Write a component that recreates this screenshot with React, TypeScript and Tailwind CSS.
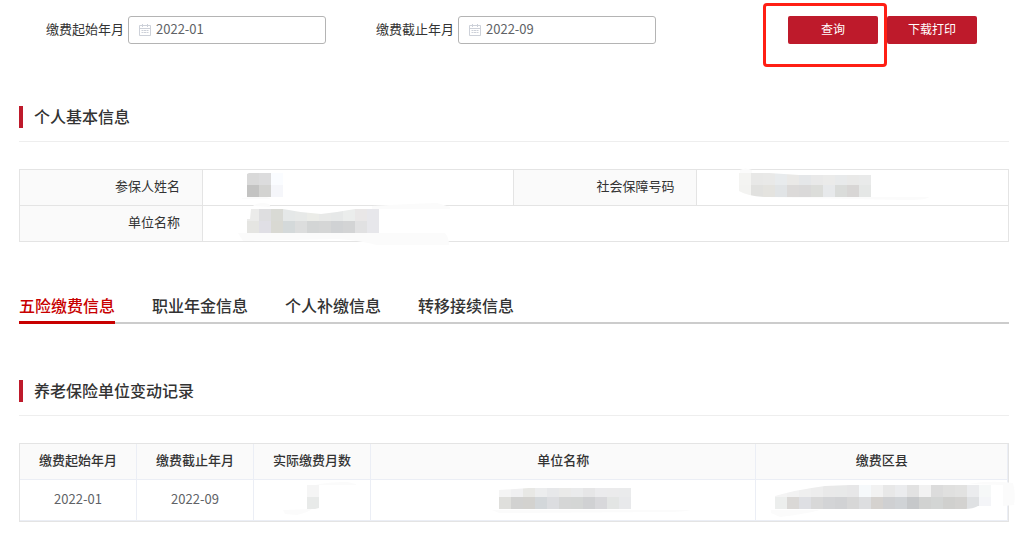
import type { ReactNode } from "react";

type Mosaic = {
  label: string;
  width: number;
  height: number;
  clip: string;
  rows: string[][];
  haze?: string;
};

const nameMosaic: Mosaic = {
  label: "参保人姓名已隐藏",
  width: 36,
  height: 24,
  clip: "M2 0H36V24H0V1Z",
  rows: [
    ["#d9d9d9", "#dcdcdd", "#fafcff"],
    ["#c3c3c2", "#d3d3d1", "#f5f6fa"],
  ],
  haze: "M-5 25Q8 23 20 24L24 26H-5Z",
};

const idMosaic: Mosaic = {
  label: "社会保障号码已隐藏",
  width: 132,
  height: 24,
  clip: "M0 0H30L60 2H132V24H25Q8 23 0 18Z",
  rows: [
    ["#f4f4f2", "#e8e8e7", "#e9e9e8", "#e8ebed", "#eae9e7", "#e5e7e9", "#e9e9e9", "#ebebea", "#e8eaeb", "#e9e9e8", "#e9eaea"],
    ["#f3f3f1", "#e1e1df", "#e4e3df", "#e1e4e6", "#dcdad9", "#dad9d9", "#dcddda", "#e7e9eb", "#dadcda", "#d8d6d5", "#e5e7e6"],
  ],
  haze: "M25 24H190Q188 27 168 27L60 25ZM1 -3Q6 -6 13 -3L13 0H1Z",
};

const companyMosaic: Mosaic = {
  label: "单位名称已隐藏",
  width: 132,
  height: 24,
  clip: "M4 0H36Q55 4 74 5Q92 3 108 0H132V24H0V10H3Z",
  rows: [
    ["#ebebea", "#dedee0", "#d9dad5", "#e5e8e8", "#e7e9e8", "#ebece8", "#e8e9e8", "#e6e8e8", "#ebedec", "#e9e7e7", "#e7e7eb"],
    ["#e5e5e2", "#e0dfe5", "#d9d9d3", "#d4d9da", "#dcdddd", "#d3d5d5", "#d5d6d6", "#d0d2d4", "#d3d4d5", "#e1e1e2", "#e7e7eb"],
  ],
  haze: "M-9 24H198Q202 28 202 36H130Q110 31 90 30L-4 32ZM6 -3Q12 -8 22 -5L24 -2ZM125 -3Q160 -5 190 -6L203 -2V0H125Z",
};

const monthsMosaic: Mosaic = {
  label: "实际缴费月数已隐藏",
  width: 12,
  height: 24,
  clip: "M0 0H12V23L8 24H0Z",
  rows: [["#f5f5f5"], ["#e8eae9"]],
  haze: "M8 0Q20 -3 40 -3L49 -1V0ZM-24 25L5 24Q2 27 -10 30L-22 29Z",
};

const employerMosaic: Mosaic = {
  label: "单位名称已隐藏",
  width: 132,
  height: 24,
  clip: "M0 5L30 3H132V24H0Z",
  rows: [
    ["#f4f4f4", "#f0f0f1", "#e8e8e5", "#ecedee", "#e7e8ea", "#eaeae9", "#eaebec", "#e6e6e7", "#ebebed", "#ebebec", "#eaebec"],
    ["#dfdfdc", "#d2d2d1", "#d3d2cf", "#d3d7da", "#dcdde0", "#d5d6d6", "#d4d6d5", "#d0d1d3", "#d8d8db", "#e3e5e4", "#e8e9eb"],
  ],
  haze: "M-7 25H192Q184 27 165 27L0 28Z",
};

const districtMosaic: Mosaic = {
  label: "缴费区县已隐藏",
  width: 216,
  height: 24,
  clip: "M0 11Q20 5 50 1L75 0H216V21H203Q198 24 190 24H0Z",
  rows: [
    ["#f4f4f4", "#f2f2f2", "#efefef", "#ededed", "#e9e9e9", "#e8e9e9", "#e7e7e8", "#f6f9fb", "#f2f2f2", "#e8e8e8", "#ebecee", "#e2e2e2", "#f2f2f2", "#dcdcdc", "#e0e0df", "#e2e2e1", "#ebecee", "#f6f8f8"],
    ["#eceeed", "#dad8d6", "#dedfe3", "#d8d8d8", "#d3d4d6", "#d1d2d4", "#d7d7d7", "#dddee0", "#d5d2cf", "#cfd0d2", "#d0d3d6", "#c6c8ca", "#d1d2d1", "#d3d5d4", "#d0d0ce", "#d3d2d0", "#dfe1e3", "#f4f5f8"],
  ],
  haze: "M-4 25H45Q30 29 5 32L-4 28ZM193 -1Q215 -5 238 -2Q241 8 239 20L228 21V0Z",
};

function Redacted({ data }: { data: Mosaic }) {
  const id = `clip-${data.label}-${data.width}-${data.clip.length}`;
  return (
    <svg
      role="img"
      aria-label={data.label}
      width={data.width}
      height={data.height}
      viewBox={`0 0 ${data.width} ${data.height}`}
      className="block shrink-0 overflow-visible"
    >
      <clipPath id={id}>
        <path d={data.clip} />
      </clipPath>
      {data.haze && <path d={data.haze} fill="#fbfbfb" />}
      <g clipPath={`url(#${id})`} shapeRendering="crispEdges">
        {data.rows.map((row, y) =>
          row.map((fill, x) => <rect key={`${x}-${y}`} x={x * 12} y={y * 12} width={12} height={12} fill={fill} />),
        )}
      </g>
    </svg>
  );
}

function CalendarIcon() {
  return (
    <svg aria-hidden="true" width="12" height="12" viewBox="0 0 12 12" fill="none" stroke="#cdd1d9" className="shrink-0">
      <path d="M.5 1.5h11v10H.5zM.5 4.5h11M3.5 0v3M8.5 0v3" />
      <path d="M2.5 6.5h7M2.5 8.5h7" strokeDasharray="2 .5" />
    </svg>
  );
}

function MonthField({ id, label, value }: { id: string; label: string; value: string }) {
  return (
    <div className="flex items-center pr-[23px]">
      <label htmlFor={id} className="w-[109px] shrink-0 pr-1 pb-0.5 text-right text-[13px] text-[#333]">
        {label}
      </label>
      <div className="flex h-7 min-w-0 flex-1 items-center gap-[5px] rounded-[3px] border border-[#b4b4b4] pl-2.5">
        <CalendarIcon />
        <input id={id} defaultValue={value} className="w-full min-w-0 bg-transparent pb-0.5 text-[13px] text-[#606266] outline-none" />
      </div>
    </div>
  );
}

function SectionTitle({ children }: { children: ReactNode }) {
  return (
    <div className="border-b border-[#eee] pb-[13px]">
      <h2 className="border-l-4 border-[#be1a2b] pb-0.5 pl-[11px] text-base leading-5 font-medium text-[#333]">{children}</h2>
    </div>
  );
}

const tabs = ["五险缴费信息", "职业年金信息", "个人补缴信息", "转移接续信息"];

export default function App() {
  return (
    <main className="min-h-screen bg-white pt-4 pr-6 pb-7 pl-[19px] font-['Noto_Sans_CJK_SC',sans-serif] text-[13px] text-[#333]">
      <form className="grid grid-cols-3" onSubmit={(e) => e.preventDefault()}>
        <MonthField id="start" label="缴费起始年月" value="2022-01" />
        <MonthField id="end" label="缴费截止年月" value="2022-09" />
        <div className="flex gap-[9px] pl-[109px]">
          <div className="relative">
            <button type="submit" className="block h-7 w-[90px] rounded-xs bg-[#be1a2b] pb-0.5 text-xs text-white">
              查询
            </button>
            <span className="pointer-events-none absolute -top-[13px] -right-[9px] -bottom-[23px] -left-[25px] z-10 rounded-[4px] border-3 border-[#ff1f14]" />
          </div>
          <button type="button" className="h-7 w-[90px] rounded-xs bg-[#be1a2b] pb-0.5 text-xs text-white">
            下载打印
          </button>
        </div>
      </form>

      <section className="mt-[62px]">
        <SectionTitle>个人基本信息</SectionTitle>
        <table className="mt-[27px] w-full table-fixed border-collapse">
          <colgroup>
            <col className="w-[18.5%]" />
            <col className="w-[31.5%]" />
            <col className="w-[18.5%]" />
            <col className="w-[31.5%]" />
          </colgroup>
          <tbody>
            <tr className="h-9">
              <th scope="row" className="border border-[#e4e4e4] bg-[#fafafa] p-0 pr-[22px] pb-1 text-right font-normal">参保人姓名</th>
              <td className="border border-[#e4e4e4] p-0 pb-1.5 pl-11">
                <Redacted data={nameMosaic} />
              </td>
              <th scope="row" className="border border-[#e4e4e4] bg-[#fafafa] p-0 pr-[22px] pb-1 text-right font-normal">社会保障号码</th>
              <td className="border border-[#e4e4e4] p-0 pb-1.5 pl-[42px]">
                <Redacted data={idMosaic} />
              </td>
            </tr>
            <tr className="h-9">
              <th scope="row" className="border border-[#e4e4e4] bg-[#fafafa] p-0 pr-[22px] pb-1 text-right font-normal">单位名称</th>
              <td colSpan={3} className="border border-[#e4e4e4] p-0 pb-1.5 pl-11">
                <Redacted data={companyMosaic} />
              </td>
            </tr>
          </tbody>
        </table>
      </section>

      <div role="tablist" className="mt-[51px] flex gap-[37px] border-b-2 border-[#ccc] text-base font-medium">
        {tabs.map((tab, i) => (
          <button
            key={tab}
            type="button"
            role="tab"
            aria-selected={i === 0}
            className={
              i === 0
                ? "-mb-0.5 border-b-3 border-[#c80000] pb-1 leading-6 text-[#c80000]"
                : "-mb-0.5 border-b-3 border-transparent pb-1 leading-6"
            }
          >
            {tab}
          </button>
        ))}
      </div>

      <section className="mt-14">
        <SectionTitle>养老保险单位变动记录</SectionTitle>
        <div className="mt-[27px] border border-[#e4e4e4]">
          <table className="w-full table-fixed border-separate border-spacing-0 text-center">
            <colgroup>
              <col className="w-[117px]" />
              <col className="w-[117px]" />
              <col className="w-[117px]" />
              <col className="w-[39%]" />
              <col />
            </colgroup>
            <thead>
              <tr className="h-9 bg-[#fafafa]">
                {["缴费起始年月", "缴费截止年月", "实际缴费月数", "单位名称", "缴费区县"].map((heading) => (
                  <th key={heading} scope="col" className="border-r border-b border-[#ebeef5] p-0 pb-1 font-medium">
                    {heading}
                  </th>
                ))}
              </tr>
            </thead>
            <tbody>
              <tr className="h-[41px] text-[#606266]">
                <td className="border-r border-b border-[#ebeef5] p-0 pb-0.5">2022-01</td>
                <td className="border-r border-b border-[#ebeef5] p-0 pb-0.5">2022-09</td>
                <td className="border-r border-b border-[#ebeef5] p-0 pb-1.5 pl-0.5">
                  <div className="flex justify-center">
                    <Redacted data={monthsMosaic} />
                  </div>
                </td>
                <td className="border-r border-b border-[#ebeef5] p-0 pb-1.5 pl-1">
                  <div className="flex justify-center">
                    <Redacted data={employerMosaic} />
                  </div>
                </td>
                <td className="border-r border-b border-[#ebeef5] p-0 pb-1.5 pl-0.5">
                  <div className="flex justify-center">
                    <Redacted data={districtMosaic} />
                  </div>
                </td>
              </tr>
            </tbody>
          </table>
        </div>
      </section>
    </main>
  );
}
